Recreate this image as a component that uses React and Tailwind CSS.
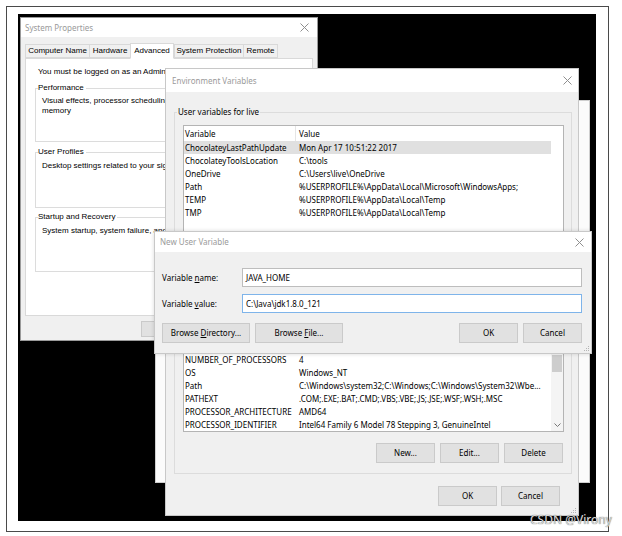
import React from 'react';

const SEG = "font-['Noto_Sans','Open_Sans',sans-serif]";
const TAH = "font-['Liberation_Sans','Arial',sans-serif]";

function CloseX() {
  return (
    <svg width="9" height="9" viewBox="0 0 9 9" className="shrink-0">
      <path d="M0.5 0.5L8.5 8.5M8.5 0.5L0.5 8.5" stroke="#8f8f8f" strokeWidth="1" fill="none" />
    </svg>
  );
}

function Grip() {
  return (
    <svg width="7" height="7" viewBox="0 0 7 7" className="absolute right-[1px] bottom-[1px]">
      <rect x="5" y="1" width="1" height="1" fill="#b5b5b5" />
      <rect x="3" y="3" width="1" height="1" fill="#b5b5b5" />
      <rect x="5" y="3" width="1" height="1" fill="#b5b5b5" />
      <rect x="1" y="5" width="1" height="1" fill="#b5b5b5" />
      <rect x="3" y="5" width="1" height="1" fill="#b5b5b5" />
      <rect x="5" y="5" width="1" height="1" fill="#b5b5b5" />
    </svg>
  );
}

const TitleBar = ({ title, cls }) => (
  <div className={`flex items-center justify-between bg-white shrink-0 text-[#9a9a9a] ${cls}`}>
    <span>{title}</span>
    <CloseX />
  </div>
);

const Btn = ({ children, cls }) => (
  <div className={`h-[20px] flex items-center justify-center whitespace-nowrap bg-[#e1e1e1] border border-[#cacaca] text-[8px] ${cls}`}>
    {children}
  </div>
);

const Row = ({ name, value, active }) => (
  <div className={`flex h-[13px] items-center whitespace-nowrap ${active ? 'bg-[#e0e0e0] w-[367px]' : ''}`}>
    <span className="w-[115px] pl-[1px] shrink-0">{name}</span>
    <span>{value}</span>
  </div>
);

const userVars = [
  ['ChocolateyLastPathUpdate', 'Mon Apr 17 10:51:22 2017'],
  ['ChocolateyToolsLocation', 'C:\\tools'],
  ['OneDrive', 'C:\\Users\\live\\OneDrive'],
  ['Path', '%USERPROFILE%\\AppData\\Local\\Microsoft\\WindowsApps;'],
  ['TEMP', '%USERPROFILE%\\AppData\\Local\\Temp'],
  ['TMP', '%USERPROFILE%\\AppData\\Local\\Temp'],
];

const sysVars = [
  ['ComSpec', 'C:\\Windows\\system32\\cmd.exe'],
  ['DriverData', 'C:\\Windows\\System32\\Drivers\\DriverData'],
  ['NUMBER_OF_PROCESSORS', '4'],
  ['OS', 'Windows_NT'],
  ['Path', 'C:\\Windows\\system32;C:\\Windows;C:\\Windows\\System32\\Wbe...'],
  ['PATHEXT', '.COM;.EXE;.BAT;.CMD;.VBS;.VBE;.JS;.JSE;.WSF;.WSH;.MSC'],
  ['PROCESSOR_ARCHITECTURE', 'AMD64'],
  ['PROCESSOR_IDENTIFIER', 'Intel64 Family 6 Model 78 Stepping 3, GenuineIntel'],
];

function SystemProperties() {
  const tabs = [
    ['Computer Name', 'w-[65px]'],
    ['Hardware', 'w-[42px]'],
    ['Advanced', 'w-[44px]', true],
    ['System Protection', 'w-[70px]'],
    ['Remote', 'w-[35px]'],
  ];
  return (
    <div className="absolute left-[20px] top-[17px] w-[298px] h-[324px] bg-[#f0f0f0] border border-[#9a9a9a] flex flex-col">
      <TitleBar title="System Properties" cls={`h-[19px] pl-[4px] pr-[8px] text-[8px] ${SEG}`} />
      <div className={`flex items-end h-[21px] ml-[4px] relative z-10 ${TAH} text-[8px]`}>
        {tabs.map(([t, w, sel]) => (
          <div
            key={t}
            className={`${w} flex items-center justify-center whitespace-nowrap border border-[#d9d9d9] ${sel ? 'h-[16px] bg-white border-b-white -mb-px' : 'h-[14px] bg-[#f0f0f0] -mr-px'}`}
          >
            {t}
          </div>
        ))}
      </div>
      <div className={`ml-[4px] w-[288px] h-[258px] bg-white border border-[#d9d9d9] flex flex-col ${TAH} text-[8px] leading-[10px]`}>
        <p className="pt-[8px] pl-[12px] whitespace-nowrap">You must be logged on as an Administrator to make most of these changes.</p>
        <div className="relative mt-[11px] ml-[9px] w-[268px] h-[54px] border border-[#dcdcdc] pt-[7px] pl-[6px]">
          <span className="absolute -top-[6px] left-[2px] bg-white pr-[2px]">Performance</span>
          <p className="whitespace-nowrap">Visual effects, processor scheduling, memory usage, and virtual</p>
          <p>memory</p>
        </div>
        <div className="relative mt-[10px] ml-[9px] w-[268px] h-[56px] border border-[#dcdcdc] pt-[8px] pl-[6px]">
          <span className="absolute -top-[6px] left-[2px] bg-white pr-[2px]">User Profiles</span>
          <p className="whitespace-nowrap">Desktop settings related to your sign-in</p>
        </div>
        <div className="relative mt-[9px] ml-[9px] w-[268px] h-[55px] border border-[#dcdcdc] pt-[8px] pl-[6px]">
          <span className="absolute -top-[6px] left-[2px] bg-white pr-[2px]">Startup and Recovery</span>
          <p className="whitespace-nowrap">System startup, system failure, and debugging information</p>
        </div>
      </div>
      <div className={`mt-[5px] ml-[120px] w-[59px] h-[16px] bg-[#e1e1e1] border border-[#cacaca] flex items-center justify-center ${TAH} text-[8px]`}>
        OK
      </div>
    </div>
  );
}

function EnvironmentVariables() {
  return (
    <div className={`absolute left-[165px] top-[68px] w-[414px] h-[448px] bg-[#f0f0f0] border border-[#c8c8c8] flex flex-col ${SEG} text-[8px]`}>
      <TitleBar title="Environment Variables" cls="h-[23px] pl-[6px] pr-[6px]" />
      <div className="relative mt-[20px] ml-[8px] w-[398px] h-[362px] border border-[#dcdcdc] flex flex-col">
        <span className="absolute -top-[7px] left-[2px] px-[1px] bg-[#f0f0f0]">User variables for live</span>
        <div className="mt-[12px] ml-[8px] w-[381px] h-[126px] bg-white border border-[#b4b4b4] overflow-hidden">
          <div className="flex h-[15px] items-center whitespace-nowrap">
            <span className="w-[112px] pl-[1px] h-full flex items-center border-r border-[#e5e5e5]">Variable</span>
            <span className="pl-[3px]">Value</span>
          </div>
          {userVars.map(([n, v], i) => (
            <Row key={n} name={n} value={v} active={i === 0} />
          ))}
        </div>
        <div className="relative mt-[11px] ml-[8px] w-[381px] h-[170px] bg-white border border-[#b4b4b4] overflow-hidden flex flex-col justify-end">
          {sysVars.map(([n, v]) => (
            <Row key={n} name={n} value={v} />
          ))}
          <div className="absolute right-0 top-0 bottom-0 w-[12px] bg-[#f4f4f4]">
            <div className="absolute left-[1px] right-[1px] bottom-[59px] h-[17px] bg-[#cdcdcd]" />
            <svg width="7" height="4" viewBox="0 0 7 4" className="absolute left-[3px] bottom-[4px]">
              <path d="M0.5 0.5L3.5 3.5L6.5 0.5" stroke="#777" fill="none" />
            </svg>
          </div>
        </div>
        <div className="flex justify-end gap-[5px] mt-[11px] mr-[8px]">
          <Btn cls="w-[59px]">New...</Btn>
          <Btn cls="w-[59px]">Edit...</Btn>
          <Btn cls="w-[59px]">Delete</Btn>
        </div>
      </div>
      <div className="flex justify-end gap-[4px] mt-[12px] mr-[18px]">
        <Btn cls="w-[59px]">OK</Btn>
        <Btn cls="w-[59px]">Cancel</Btn>
      </div>
      <Grip />
    </div>
  );
}

function NewUserVariable() {
  return (
    <div className={`absolute left-[154px] top-[231px] w-[438px] h-[123px] bg-[#f0f0f0] border border-[#c8c8c8] shadow-[0_0_4px_rgba(0,0,0,0.15)] flex flex-col ${SEG} text-[8px]`}>
      <TitleBar title="New User Variable" cls="h-[20px] pl-[5px] pr-[7px]" />
      <div className="flex items-center mt-[16px] ml-[7px]">
        <span className="w-[80px]">
          Variable <span className="underline">n</span>ame:
        </span>
        <div className="w-[340px] h-[19px] bg-white border border-[#bdbdbd] flex items-center pl-[3px]">JAVA_HOME</div>
      </div>
      <div className="flex items-center mt-[7px] ml-[7px]">
        <span className="w-[80px]">
          Variable <span className="underline">v</span>alue:
        </span>
        <div className="w-[340px] h-[19px] bg-white border border-[#7eb4ea] flex items-center pl-[3px]">C:\Java\jdk1.8.0_121</div>
      </div>
      <div className="flex items-center mt-[10px] ml-[7px] mr-[9px]">
        <Btn cls="w-[88px]">
          <span>
            Browse <span className="underline">D</span>irectory...
          </span>
        </Btn>
        <Btn cls="w-[88px] ml-[5px]">
          <span>
            Browse <span className="underline">F</span>ile...
          </span>
        </Btn>
        <div className="flex-1" />
        <Btn cls="w-[59px]">OK</Btn>
        <Btn cls="w-[59px] ml-[5px]">Cancel</Btn>
      </div>
      <Grip />
    </div>
  );
}

export default function App() {
  return (
    <div className="relative w-[622px] h-[536px] bg-white overflow-hidden text-black">
      <div className="absolute left-[6px] top-[6px] w-[603px] h-[526px] border border-[#4a4a4a]" />
      <div className="absolute left-[18px] top-[14px] w-[578px] h-[507px] bg-black" />
      <div className="absolute left-[155px] top-[100px] w-[435px] h-[383px] bg-[#fbfbfb] border border-[#cfcfcf]" />
      <SystemProperties />
      <EnvironmentVariables />
      <NewUserVariable />
      <div className={`absolute left-[530px] top-[511px] text-[12px] text-[#d8d8d8] [text-shadow:0_0_1px_#444] ${SEG}`}>
        CSDN @Virony
      </div>
    </div>
  );
}
